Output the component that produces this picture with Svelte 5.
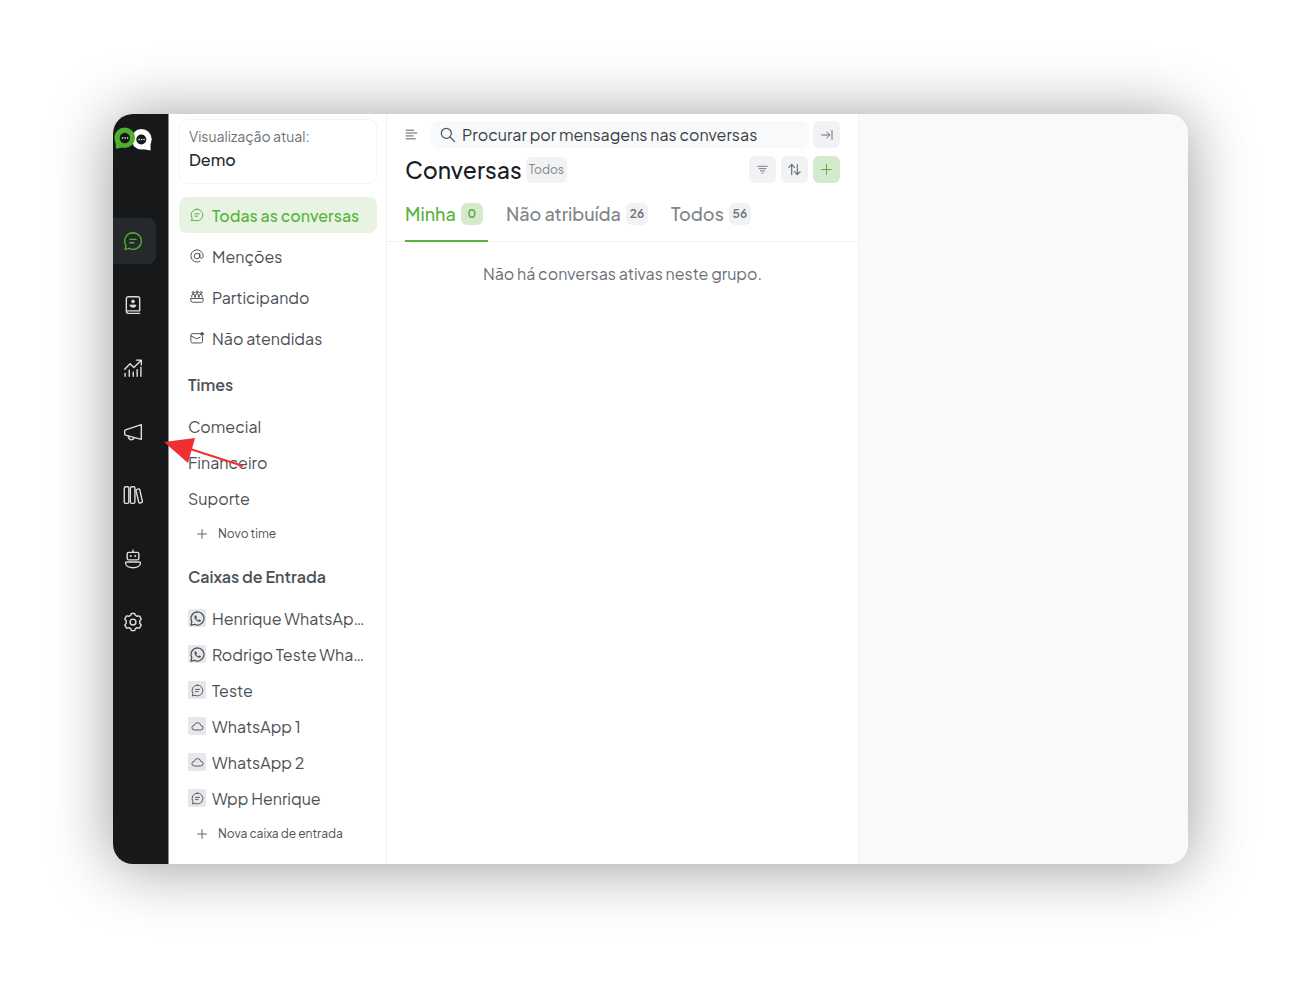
<script>
  const rail = [
    { icon: 'chat', label: 'Conversas', active: true },
    { icon: 'contacts', label: 'Contatos' },
    { icon: 'reports', label: 'Relatórios' },
    { icon: 'campaign', label: 'Campanhas' },
    { icon: 'library', label: 'Central de ajuda' },
    { icon: 'bot', label: 'Robôs' },
    { icon: 'gear', label: 'Configurações' }
  ];
  const views = [
    { icon: 'chat', label: 'Todas as conversas', active: true },
    { icon: 'at', label: 'Menções' },
    { icon: 'people', label: 'Participando' },
    { icon: 'mail', label: 'Não atendidas' }
  ];
  const teams = ['Comecial', 'Financeiro', 'Suporte'];
  const inboxes = [
    { icon: 'whatsapp', label: 'Henrique WhatsAp…' },
    { icon: 'whatsapp', label: 'Rodrigo Teste Wha…' },
    { icon: 'chat', label: 'Teste' },
    { icon: 'cloud', label: 'WhatsApp 1' },
    { icon: 'cloud', label: 'WhatsApp 2' },
    { icon: 'chat', label: 'Wpp Henrique' }
  ];
  const tabs = [
    { label: 'Minha', count: 0 },
    { label: 'Não atribuída', count: 26 },
    { label: 'Todos', count: 56 }
  ];
  let current = $state(0);
</script>

{#snippet icon(name, size)}
  <svg width={size} height={size} viewBox="0 0 24 24" fill="none" stroke="currentColor" stroke-width="1.7" stroke-linecap="round" stroke-linejoin="round" aria-hidden="true">
    {#if name === 'chat'}
      <path d="M12 2a10 10 0 1 1-4.6 18.9L2.600 22l1-4.600A10 10 0 0 1 12 2z" /><path d="M8.300 10h7.400M8.300 14h4.700" />
    {:else if name === 'contacts'}
      <path d="M4 19.500v-15A2.500 2.500 0 0 1 6.500 2h11A2.500 2.500 0 0 1 20 4.500V19H5M4 19.500A2.500 2.500 0 0 0 6.500 22H20" /><circle cx="12" cy="7.700" r="1.700" fill="currentColor" stroke-width="1" /><path d="M8.500 12h7v.6c0 1.200-1.500 2.200-3.500 2.200s-3.500-1-3.500-2.200z" fill="currentColor" stroke-width=".8" />
    {:else if name === 'reports'}
      <path d="M2 13.500 8.500 7l4.500 4.500L21.500 3M16 2.500h6V8M2.500 18.500V22M7.500 14.500V22M12.300 17v5M17 14v8M21.500 11v11" />
    {:else if name === 'campaign'}
      <path d="M22 3.200v17.600L3 15.800a1.500 1.500 0 0 1-1-1.400v-3.500c0-.7.4-1.200 1-1.400zM6.500 17a3.600 3.600 0 0 0 6.900 1.900" />
    {:else if name === 'library'}
      <rect x="1.500" y="2" width="5.500" height="20" rx="1.700" /><rect x="8.800" y="2" width="5.500" height="20" rx="1.700" /><path d="m16.700 5.200 1.800-.5c.8-.2 1.400.2 1.600 1l3.100 13.700c.2.800-.2 1.500-1 1.700l-1.600.5c-.8.2-1.500-.2-1.700-1L15.700 7c-.2-.9.200-1.600 1-1.800z" />
    {:else if name === 'bot'}
      <path d="M12 1.300V4" /><rect x="5" y="4" width="14" height="9" rx="2" /><path d="M9.300 8.300v.1M14.700 8.300v.1" stroke-width="2.500" /><path d="M4.500 15.500h15c.8 0 1.500.5 1.500 1.300 0 3.500-4 5.700-9 5.700s-9-2.200-9-5.700c0-.8.7-1.300 1.500-1.300z" />
    {:else if name === 'gear'}
      <path d="M9.400 3.800 10 1.700h4l.6 2.100a9 9 0 0 1 2.300 1.400l2.200-.6c.3 0 .6 0 .8.300l1.800 3.100c.2.300.2.600 0 .8L20.100 10.500a9 9 0 0 1 0 3l1.600 1.700c.2.200.2.500 0 .8l-1.800 3.100c-.2.300-.5.400-.8.300l-2.200-.6a9 9 0 0 1-2.300 1.400l-.6 2.100h-4l-.6-2.100a9 9 0 0 1-2.300-1.400l-2.200.6c-.4.100-.6 0-.8-.3L2.300 16c-.2-.3-.2-.6 0-.8l1.600-1.700a9 9 0 0 1 0-3L2.300 8.800c-.2-.2-.2-.5 0-.8l1.800-3.100c.2-.3.500-.4.800-.3l2.200.6a9 9 0 0 1 2.300-1.400z" /><circle cx="12" cy="12" r="3.500" />
    {:else if name === 'at'}
      <circle cx="12" cy="12" r="4.800" /><path d="M16.800 7.500v6c0 3.400 5.700 3.500 5.700-1.500A10.500 10.500 0 1 0 17 21.200" />
    {:else if name === 'people'}
      <circle cx="5.500" cy="4.500" r="1.800" /><circle cx="12" cy="3.500" r="1.800" /><circle cx="18.500" cy="4.500" r="1.800" /><path d="M3 12v-2a2.500 2.500 0 0 1 5 0v2M9.500 12V9a2.500 2.500 0 0 1 5 0v3M16 12v-2a2.500 2.500 0 0 1 5 0v2M1.500 14.500h21v3.500a3 3 0 0 1-3 3h-15a3 3 0 0 1-3-3z" />
    {:else if name === 'mail'}
      <path d="M16.500 4.500H4.500a3 3 0 0 0-3 3v10a3 3 0 0 0 3 3h14a3 3 0 0 0 3-3V9.500M2 8.500l9.500 5 6-3" /><circle cx="20.500" cy="5" r="2.300" fill="currentColor" />
    {:else if name === 'cloud'}
      <path d="M6 18.500a4.300 4.300 0 0 1 0-8.600 6.100 6.100 0 0 1 12 0 4.300 4.300 0 0 1 0 8.600z" />
    {:else if name === 'whatsapp'}
      <path d="M12 1.500A10.500 10.500 0 1 1 7 21.300L1.500 22.500 2.900 17A10.500 10.500 0 0 1 12 1.500z" stroke-width="2" /><path d="M8.800 6.700c-.7 0-1.800.9-1.800 2.500 0 3.500 4.500 8 8 8 1.300 0 2.500-.9 2.500-2 0-.5-2.300-1.700-2.800-1.500l-1.200 1.200c-1.500-.5-2.900-1.900-3.500-3.400l1-1.200c.1-.5-.9-3.600-2.200-3.600z" fill="currentColor" stroke="none" />
    {:else if name === 'plus'}
      <path d="M12 3v18M3 12h18" />
    {:else if name === 'search'}
      <circle cx="9.500" cy="9.500" r="7.500" stroke-width="1.800" /><path d="m15 15 7 7" stroke-width="1.800" />
    {:else if name === 'menu'}
      <path d="M2 4h14M2 9.300h20M2 14.600h13M2 20h17" />
    {:else if name === 'collapse'}
      <path d="M1.500 12h16M11.500 6l6 6-6 6M22 3v18" stroke-width="2" />
    {:else if name === 'filter'}
      <path d="M1.500 5h21M4.500 10h15M7.500 15h9M11 20h2" stroke-width="1.900" />
    {:else if name === 'sort'}
      <path d="M7.500 20V4M3 8.500 7.500 4 12 8.500M16.500 4v16M12 15.500l4.500 4.500 4.500-4.500" stroke-width="1.900" />
    {/if}
  </svg>
{/snippet}

<div class="stage">
  <div class="window">
    <nav class="rail" aria-label="Principal">
      <svg class="logo" width="38" height="26" viewBox="0 0 38 26" aria-hidden="true">
        <circle cx="27.500" cy="12.300" r="10.200" fill="#fff" />
        <path d="M36.500 16 36.600 23.500 28 22z" fill="#fff" />
        <circle cx="27.300" cy="12.500" r="5" fill="#17181a" />
        <circle cx="10.700" cy="10.800" r="10.300" fill="#4eb02e" />
        <path d="M1.500 14 2 21.700 11 20z" fill="#4eb02e" />
        <circle cx="10.800" cy="11" r="5.200" fill="#17181a" />
        <path d="M8.500 11h.1M11 11h.1M13.500 11h.1M25 12.500h.1M27.500 12.500h.1M30 12.500h.1" stroke="#fff" stroke-width="1.500" stroke-linecap="round" />
      </svg>
      <div class="rail-items">
        {#each rail as item}
          <a href="#{item.icon}" class:active={item.active} aria-label={item.label}>{@render icon(item.icon, 20)}</a>
        {/each}
      </div>
    </nav>

    <aside class="sidebar">
      <div class="account"><span>Visualização atual:</span><strong>Demo</strong></div>
      <nav class="views" aria-label="Visualizações">
        {#each views as v}
          <a href="#{v.icon}" class="item" class:active={v.active}><span class="glyph">{@render icon(v.icon, 14)}</span><span class="name">{v.label}</span></a>
        {/each}
      </nav>
      <h2>Times</h2>
      <nav aria-label="Times">
        {#each teams as team}
          <a href="#{team}" class="item"><span class="name">{team}</span></a>
        {/each}
      </nav>
      <button class="add">{@render icon('plus', 12)}Novo time</button>
      <h2>Caixas de Entrada</h2>
      <nav aria-label="Caixas de Entrada">
        {#each inboxes as box}
          <a href="#{box.icon}" class="item"><span class="glyph tile">{@render icon(box.icon, box.icon === 'whatsapp' ? 15 : 13)}</span><span class="name">{box.label}</span></a>
        {/each}
      </nav>
      <button class="add">{@render icon('plus', 12)}Nova caixa de entrada</button>
    </aside>

    <main class="list">
      <div class="top">
        <button class="menu" aria-label="Menu">{@render icon('menu', 13)}</button>
        <label class="search">{@render icon('search', 16)}<input type="text" aria-label="Procurar" placeholder="Procurar por mensagens nas conversas" /></label>
        <button class="square" aria-label="Recolher">{@render icon('collapse', 12)}</button>
      </div>
      <div class="title">
        <h1>Conversas</h1><span class="chip">Todos</span>
        <div class="actions">
          <button class="square" aria-label="Filtrar">{@render icon('filter', 11)}</button>
          <button class="square" aria-label="Ordenar">{@render icon('sort', 15)}</button>
          <button class="square green" aria-label="Nova conversa">{@render icon('plus', 13)}</button>
        </div>
      </div>
      <div class="tabs" role="tablist">
        {#each tabs as tab, i}
          <button role="tab" aria-selected={current === i} class:current={current === i} onclick={() => (current = i)}>{tab.label}<span class="count">{tab.count}</span></button>
        {/each}
      </div>
      <p>Não há conversas ativas neste grupo.</p>
    </main>

    <section class="detail" aria-label="Conversa"></section>

    <svg class="pointer" width="82" height="34" viewBox="0 0 82 34" aria-hidden="true">
      <path d="M20 10 79 29" stroke="#ee3034" stroke-width="2" />
      <path d="M0 5 31 1 24 26z" fill="#ee3034" />
    </svg>
  </div>
</div>

<style>
  :global(body) { margin: 0; background: #fff; }
  .stage {
    box-sizing: border-box;
    min-height: 100vh;
    padding: 114px 112px 118px 113px;
    display: flex;
    font-family: "Plus Jakarta Sans", Inter, sans-serif;
    font-size: 16px;
    color: #4c5155;
  }
  .window {
    position: relative;
    flex: 1;
    min-width: 0;
    display: flex;
    border-radius: 20px;
    background: #fff;
    box-shadow: 0 3px 64px rgba(0, 0, 0, .4);
  }
  svg { display: block; flex: none; }
  a { color: inherit; text-decoration: none; }
  button { font: inherit; color: inherit; border: 0; background: none; padding: 0; cursor: pointer; }
  h1, h2, p { margin: 0; }

  .rail {
    flex: none;
    width: 55px;
    background: #17181a;
    border-right: 1px solid #8b8d90;
    border-radius: 20px 0 0 20px;
  }
  .logo { margin: 13px 0 0 1px; }
  .rail-items {
    height: 427px;
    margin-top: 65px;
    display: flex;
    flex-direction: column;
    justify-content: space-between;
  }
  .rail-items a {
    width: 43px;
    height: 46px;
    box-sizing: border-box;
    padding-right: 3px;
    display: grid;
    place-items: center;
    color: #dcdddf;
    border-radius: 0 8px 8px 0;
  }
  .rail-items .active { background: #26292b; color: #4eb02e; }

  .sidebar {
    flex: none;
    box-sizing: border-box;
    width: 218px;
    padding: 5px 9px 12px 10px;
    border-right: 1px solid #f0f1f3;
  }
  .account {
    box-sizing: border-box;
    height: 65px;
    padding: 5px 9px;
    border: 1px solid #f3f4f5;
    border-radius: 8px;
    display: flex;
    flex-direction: column;
    font-size: 14px;
    line-height: 23px;
    color: #6c7075;
  }
  .account strong { font-size: 16px; font-weight: 500; color: #26292b; }
  .views { margin-top: 13px; display: grid; gap: 5px; }
  .item {
    height: 36px;
    box-sizing: border-box;
    padding: 0 9px;
    display: flex;
    align-items: center;
    gap: 6px;
    border-radius: 8px;
  }
  .item.active { background: #e8f3e4; color: #57b33a; font-weight: 500; }
  .name { min-width: 0; overflow: hidden; white-space: nowrap; text-overflow: ellipsis; }
  .glyph { flex: none; width: 18px; height: 18px; display: grid; place-items: center; }
  .tile { background: #e6e7ea; border-radius: 2px; }
  h2 {
    margin: 19px 9px 13px;
    font-size: 16px;
    line-height: 20px;
    font-weight: 600;
  }
  .add {
    height: 32px;
    padding: 3px 0 0 17px;
    display: flex;
    align-items: center;
    gap: 10px;
    font-size: 12px;
    white-space: nowrap;
  }

  .list {
    flex: none;
    box-sizing: border-box;
    width: 472px;
    border-right: 1px solid #f0f1f3;
  }
  .top { display: flex; align-items: center; gap: 4px; padding: 7px 18px 0; }
  .menu { width: 22px; }
  .search {
    flex: 1;
    min-width: 0;
    height: 27px;
    box-sizing: border-box;
    padding: 0 9px;
    display: flex;
    align-items: center;
    gap: 6px;
    background: #f8f9fb;
    border-radius: 8px;
  }
  .search input {
    flex: 1;
    min-width: 0;
    padding: 0;
    border: 0;
    outline: 0;
    background: none;
    font: inherit;
  }
  .search input::placeholder { color: #3a3e42; opacity: 1; }
  .square {
    width: 27px;
    height: 27px;
    display: grid;
    place-items: center;
    background: #f1f2f4;
    border-radius: 6px;
    color: #6c7075;
  }
  .green { background: #d5eacd; color: #57a33d; }
  .title { display: flex; align-items: center; padding: 8px 18px 0; }
  h1 { font-size: 23px; line-height: 27px; font-weight: 500; color: #1b1d1f; }
  .chip {
    margin-left: 4px;
    padding: 0 3px;
    font-size: 12px;
    line-height: 26px;
    background: #f1f2f4;
    border-radius: 6px;
    color: #80858a;
  }
  .actions { margin-left: auto; display: flex; gap: 5px; }
  .tabs {
    height: 59px;
    box-sizing: border-box;
    padding: 0 18px;
    display: flex;
    gap: 18px;
    border-bottom: 1px solid #f0f1f3;
  }
  .tabs button {
    height: 59px;
    box-sizing: border-box;
    padding: 4px 5px 0 0;
    display: flex;
    align-items: center;
    gap: 5px;
    font-size: 18px;
    font-weight: 500;
    color: #80858a;
    white-space: nowrap;
    border-bottom: 2px solid transparent;
  }
  .tabs .current { color: #57b33a; border-bottom-color: #57b33a; }
  .count {
    min-width: 22px;
    font-size: 12px;
    line-height: 22px;
    font-weight: 600;
    text-align: center;
    color: #6c7075;
    background: #f1f2f4;
    border-radius: 6px;
  }
  .current .count { background: #d5eacd; color: #57a33d; }
  p { padding-top: 21px; line-height: 22px; text-align: center; color: #6c7075; }
  .detail { flex: 1; min-width: 0; background: #f8f9fb; border-radius: 0 20px 20px 0; }
  .pointer { position: absolute; left: 51px; top: 323px; }
</style>
